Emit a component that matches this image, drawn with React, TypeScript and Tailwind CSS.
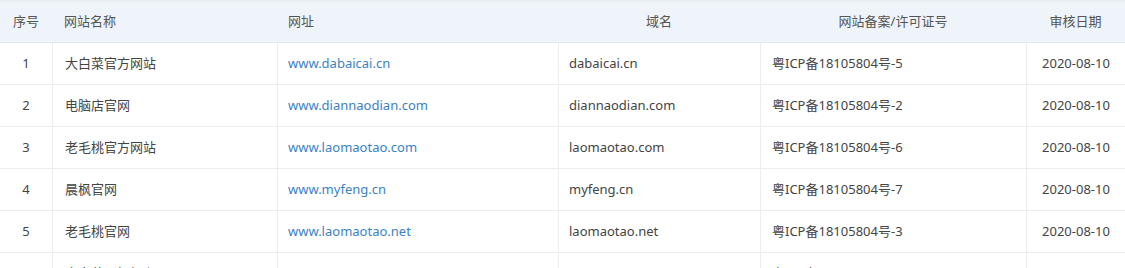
import React from "react";

const rows = [
  ["1", "大白菜官方网站", "www.dabaicai.cn", "dabaicai.cn", "粤ICP备18105804号-5", "2020-08-10"],
  ["2", "电脑店官网", "www.diannaodian.com", "diannaodian.com", "粤ICP备18105804号-2", "2020-08-10"],
  ["3", "老毛桃官方网站", "www.laomaotao.com", "laomaotao.com", "粤ICP备18105804号-6", "2020-08-10"],
  ["4", "晨枫官网", "www.myfeng.cn", "myfeng.cn", "粤ICP备18105804号-7", "2020-08-10"],
  ["5", "老毛桃官网", "www.laomaotao.net", "laomaotao.net", "粤ICP备18105804号-3", "2020-08-10"],
  ["6", "大白菜U盘启动", "www.dabaicaiu.com", "dabaicaiu.com", "粤ICP备18105804号-4", "2020-08-10"],
];

const cols = "grid-cols-[52px_225px_281px_202px_266px_99px]";

export default function App() {
  return (
    <div
      className="w-[1125px] h-[268px] overflow-hidden bg-white text-[13px] text-[#444]"
      style={{ fontFamily: '"Noto Sans", "Noto Sans CJK SC", sans-serif' }}
    >
      <div className="border-t-2 border-[#e9eef2]">
        <div className={`grid ${cols} h-[41px] items-center bg-[#eef4f9] text-[#555] border-b border-[#e3e9ee]`}>
          <div className="text-center">序号</div>
          <div className="pl-[12px]">网站名称</div>
          <div className="pl-[11px]">网址</div>
          <div className="text-center">域名</div>
          <div className="text-center">网站备案/许可证号</div>
          <div className="text-center">审核日期</div>
        </div>
        {rows.map((r, i) => (
          <div key={i} className={`grid ${cols} h-[42px] border-b border-[#e9edf0]`}>
            <div className="flex items-center justify-center">{r[0]}</div>
            <div className="flex items-center pl-[12px] border-l border-[#e9edf0]">{r[1]}</div>
            <div className="flex items-center pl-[10px] border-l border-[#e9edf0] text-[#3b82c4]">{r[2]}</div>
            <div className="flex items-center pl-[10px] border-l border-[#e9edf0]">{r[3]}</div>
            <div className="flex items-center pl-[11px] border-l border-[#e9edf0]">{r[4]}</div>
            <div className="flex items-center justify-center border-l border-[#e9edf0]">{r[5]}</div>
          </div>
        ))}
      </div>
    </div>
  );
}
